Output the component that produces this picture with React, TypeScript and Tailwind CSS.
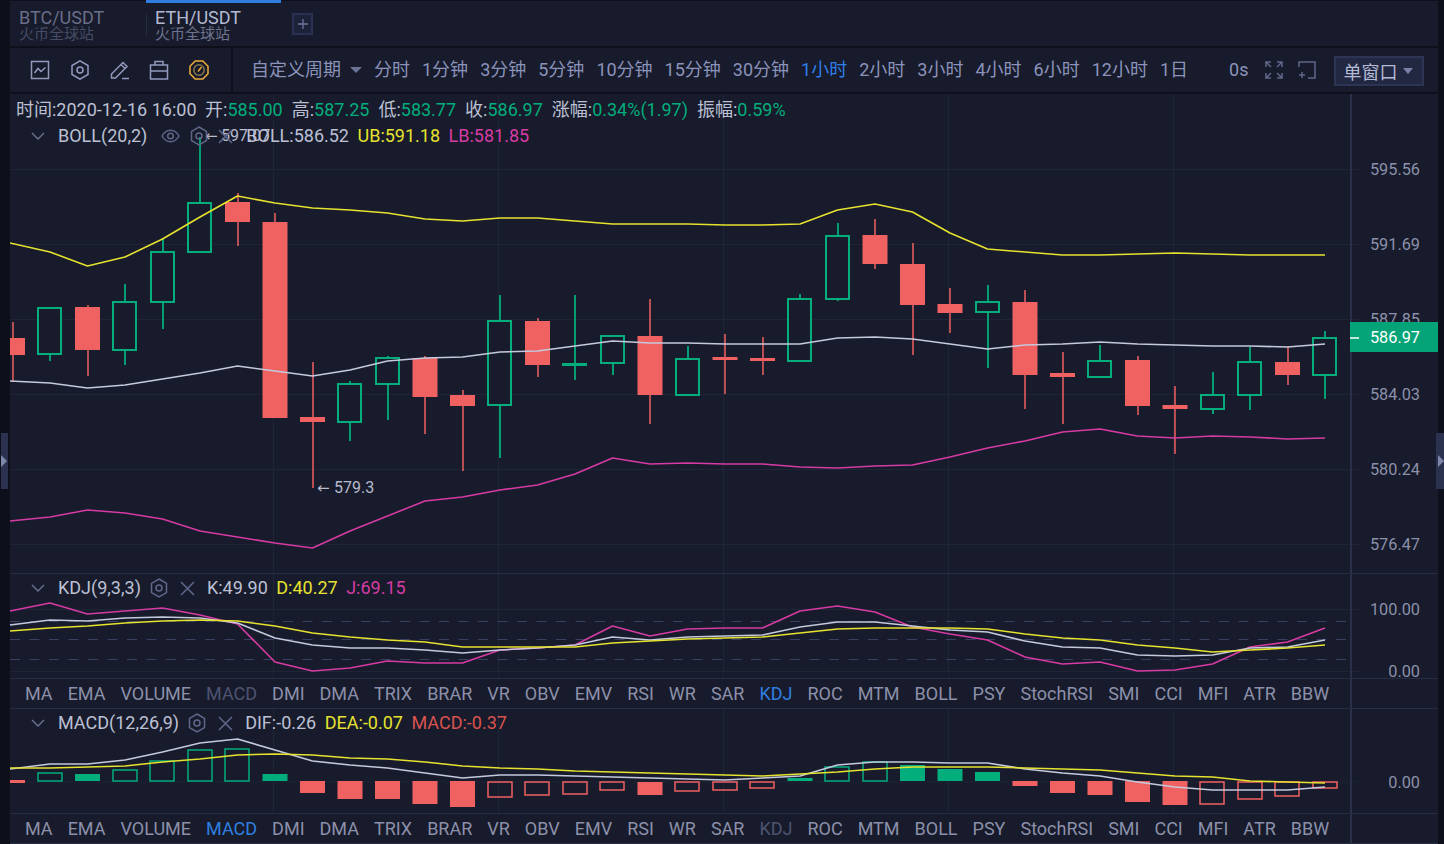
import * as React from 'react';

const GREEN = '#03ad7c';
const RED = '#f06262';
const YELLOW = '#e6e22f';
const PINK = '#d63ba3';
const WHITE = '#c5c9de';
const GRID = '#1f2537';
const AXIS = '#2a3047';
const AXIS_TEXT = '#8c90aa';

const slotX = (i: number) => 12.5 + 37.5 * i;

// [high, top of body, bottom of body, low, up?] in page pixels
const candles: [number, number, number, number, boolean][] = [
  [322, 338, 355, 382, false],
  [307, 308, 354, 361, true],
  [305, 307, 350, 376, false],
  [284, 302, 350, 365, true],
  [238, 252, 302, 329, true],
  [137, 203, 252, 252, true],
  [193, 202, 222, 246, false],
  [213, 222, 418, 418, false],
  [362, 417, 422, 488, false],
  [381, 384, 422, 441, true],
  [356, 358, 384, 420, true],
  [356, 358, 397, 434, false],
  [390, 395, 406, 471, false],
  [295, 321, 405, 458, true],
  [318, 321, 365, 377, false],
  [295, 364, 365, 380, true],
  [336, 336, 363, 375, true],
  [299, 336, 395, 424, false],
  [346, 359, 395, 395, true],
  [334, 357, 360, 394, false],
  [337, 358, 361, 375, false],
  [294, 299, 361, 362, true],
  [223, 236, 299, 301, true],
  [219, 235, 264, 269, false],
  [243, 264, 305, 355, false],
  [288, 304, 313, 333, false],
  [285, 302, 312, 368, true],
  [290, 302, 375, 409, false],
  [352, 373, 377, 424, false],
  [345, 361, 377, 378, true],
  [356, 360, 406, 415, false],
  [386, 405, 409, 454, false],
  [372, 395, 409, 414, true],
  [347, 362, 395, 410, true],
  [346, 362, 375, 385, false],
  [331, 338, 375, 399, true],
];

const bollUpper = [243, 252, 266, 257, 239, 217, 196, 203, 208, 210, 213, 219, 221, 218, 218, 221, 224, 224, 224, 225, 225, 224, 210, 204, 212, 233, 249, 252, 255, 255, 254, 253, 254, 255, 255, 255];
const bollMid = [381, 383, 388, 385, 379, 373, 366, 371, 376, 370, 361, 358, 357, 352, 351, 346, 341, 343, 343, 344, 344, 344, 338, 337, 339, 344, 349, 345, 344, 342, 344, 345, 346, 346, 347, 344];
const bollLower = [521, 517, 510, 513, 519, 531, 537, 543, 548, 531, 516, 501, 497, 490, 485, 474, 458, 464, 463, 464, 464, 467, 468, 466, 465, 457, 448, 441, 432, 429, 436, 438, 436, 437, 439, 438];

const kdjJ = [611, 603, 614, 611, 608, 615, 624, 662, 671, 668, 661, 663, 663, 650, 648, 645, 626, 636, 629, 628, 628, 611, 606, 612, 627, 634, 640, 657, 664, 662, 671, 670, 664, 647, 642, 628];
const kdjK = [625, 620, 621, 618, 617, 618, 623, 638, 645, 648, 648, 650, 653, 650, 648, 645, 637, 640, 637, 636, 635, 627, 622, 622, 626, 630, 632, 641, 647, 648, 655, 656, 655, 648, 647, 640];
const kdjD = [631, 628, 626, 623, 621, 620, 621, 626, 633, 637, 640, 642, 647, 647, 647, 647, 643, 641, 639, 638, 637, 633, 629, 628, 628, 628, 629, 634, 638, 640, 645, 648, 652, 650, 648, 645];

const macdDif = [769, 764, 764, 760, 752, 743, 739, 750, 761, 765, 768, 773, 778, 775, 775, 776, 777, 778, 779, 780, 778, 776, 765, 762, 762, 763, 763, 769, 773, 776, 782, 787, 790, 790, 790, 787];
const macdDea = [768, 768, 767, 766, 762, 759, 755, 754, 755, 758, 759, 762, 766, 768, 769, 771, 772, 773, 774, 775, 776, 774, 772, 769, 767, 767, 767, 768, 769, 770, 773, 776, 777, 781, 782, 783];

// [top, bottom, up?, filled?]
const macdBars: [number, number, boolean, boolean][] = [
  [780, 783, false, true],
  [773, 781, true, false],
  [774, 781, true, true],
  [770, 781, true, false],
  [761, 781, true, false],
  [750, 781, true, false],
  [749, 781, true, false],
  [774, 781, true, true],
  [781, 793, false, true],
  [781, 799, false, true],
  [781, 799, false, true],
  [781, 804, false, true],
  [781, 807, false, true],
  [782, 797, false, false],
  [782, 795, false, false],
  [782, 794, false, false],
  [782, 790, false, false],
  [782, 795, false, true],
  [782, 791, false, false],
  [782, 790, false, false],
  [782, 788, false, false],
  [778, 781, true, true],
  [767, 781, true, false],
  [762, 781, true, false],
  [765, 781, true, true],
  [769, 781, true, true],
  [772, 781, true, true],
  [781, 786, false, true],
  [781, 793, false, true],
  [781, 795, false, true],
  [781, 802, false, true],
  [781, 805, false, true],
  [782, 804, false, false],
  [782, 799, false, false],
  [782, 796, false, false],
  [782, 788, false, false],
];

const periods = ['分时', '1分钟', '3分钟', '5分钟', '10分钟', '15分钟', '30分钟', '1小时', '2小时', '3小时', '4小时', '6小时', '12小时', '1日'];
const indicators = ['MA', 'EMA', 'VOLUME', 'MACD', 'DMI', 'DMA', 'TRIX', 'BRAR', 'VR', 'OBV', 'EMV', 'RSI', 'WR', 'SAR', 'KDJ', 'ROC', 'MTM', 'BOLL', 'PSY', 'StochRSI', 'SMI', 'CCI', 'MFI', 'ATR', 'BBW'];

function linePoints(ys: number[]): string {
  return ys.map((y, i) => `${i === 0 ? 10 : slotX(i)},${y}`).join(' ');
}

function Series({ ys, color }: { ys: number[]; color: string }) {
  return <polyline points={linePoints(ys)} fill="none" stroke={color} strokeWidth={1.6} strokeLinejoin="round" />;
}

function VerticalGrid({ top, bottom }: { top: number; bottom: number }) {
  return (
    <>
      {[273, 498, 723, 948, 1173].map((x) => (
        <line key={x} x1={x + 0.5} x2={x + 0.5} y1={top} y2={bottom} stroke={GRID} />
      ))}
      <line x1={1351} x2={1351} y1={top} y2={bottom} stroke={AXIS} strokeWidth={2} />
    </>
  );
}

function AxisLabel({ y, label }: { y: number; label: string }) {
  return (
    <>
      <line x1={10} x2={1359} y1={y + 0.5} y2={y + 0.5} stroke={GRID} />
      <text x={1420} y={y + 6} textAnchor="end" fontSize={16.3} fill={AXIS_TEXT}>
        {label}
      </text>
    </>
  );
}

function Extreme({ x, y, textX, label }: { x: number; y: number; textX: number; label: string }) {
  return (
    <text x={x} y={y} fontSize={16} fill="#b8bccf">
      <tspan fontFamily="'DejaVu Sans', sans-serif" fontSize={15}>
        ←
      </tspan>
      <tspan x={textX}>{label}</tspan>
    </text>
  );
}

function Chevron() {
  return (
    <svg width="14" height="8" viewBox="0 0 14 8" fill="none" stroke="#6d7391" strokeWidth="1.4" className="ml-[21px] mr-[13px] shrink-0">
      <path d="M1 1l6 6 6-6" />
    </svg>
  );
}

function HexIcon() {
  return (
    <svg width="18" height="20" viewBox="0 0 18 20" fill="none" stroke="#61678a" strokeWidth="1.5" className="shrink-0">
      <path d="M9 1l7.5 4.4v9.2L9 19l-7.5-4.4V5.4z" />
      <circle cx="9" cy="10" r="3" />
    </svg>
  );
}

function EyeIcon() {
  return (
    <svg width="19" height="14" viewBox="0 0 19 14" fill="none" stroke="#61678a" strokeWidth="1.4" className="shrink-0">
      <path d="M1 7c2.2-3.8 5-5.7 8.5-5.7S15.800 3.200 18 7c-2.200 3.800-5 5.700-8.500 5.700S3.200 10.800 1 7z" />
      <circle cx="9.5" cy="7" r="2.8" />
    </svg>
  );
}

function CloseIcon() {
  return (
    <svg width="15" height="15" viewBox="0 0 15 15" fill="none" stroke="#61678a" strokeWidth="1.5" className="shrink-0">
      <path d="M1 1l13 13M14 1L1 14" />
    </svg>
  );
}

function IndicatorHeader({ label, eye, values }: { label: string; eye?: boolean; values: [string, string][] }) {
  return (
    <div className="flex h-6 items-center text-[18px] text-[#bcc0d4]">
      <Chevron />
      <span>{label}</span>
      {eye ? (
        <div className="ml-[14px] mr-[13px] flex items-center gap-[10px]">
          <EyeIcon />
          <HexIcon />
          <CloseIcon />
        </div>
      ) : (
        <div className="ml-[9px] mr-[12px] flex items-center gap-[12px]">
          <HexIcon />
          <CloseIcon />
        </div>
      )}
      <div className="flex gap-[8.5px]">
        {values.map(([text, color]) => (
          <span key={text} style={{ color }}>
            {text}
          </span>
        ))}
      </div>
    </div>
  );
}

function IndicatorTabs({ active, muted }: { active: string; muted: string }) {
  return (
    <div className="flex h-[29px] w-[1342px] items-center gap-[15px] border-r-2 border-[#2a3047] pl-[15px] text-[18px] text-[#8c90aa]">
      {indicators.map((name) => (
        <span key={name} className={name === active ? 'text-[#2f7fe0]' : name === muted ? 'text-[#4e5371]' : ''}>
          {name}
        </span>
      ))}
    </div>
  );
}

function ToolIcon({ children }: { children: React.ReactNode }) {
  return (
    <svg width="20" height="20" viewBox="0 0 20 20" fill="none" stroke="#9399bd" strokeWidth="1.5" className="shrink-0">
      {children}
    </svg>
  );
}

function MainChart() {
  return (
    <svg width="1428" height="479" viewBox="10 94 1428 479" className="block font-[Roboto]">
      {[169, 244, 319, 394, 469, 544].map((y, i) => (
        <AxisLabel key={y} y={y} label={['595.56', '591.69', '587.85', '584.03', '580.24', '576.47'][i]} />
      ))}
      <VerticalGrid top={94} bottom={573} />
      {candles.map(([high, top, bottom, low, up], i) => {
        const x = slotX(i);
        const wickX = Math.round(x);
        const color = up ? GREEN : RED;
        const wick = up ? 1.8 : 1.5;
        return (
          <g key={i}>
            <line x1={wickX} x2={wickX} y1={high} y2={top} stroke={color} strokeWidth={wick} />
            <line x1={wickX} x2={wickX} y1={bottom} y2={low} stroke={color} strokeWidth={wick} />
            {up ? (
              <rect x={Math.floor(x - 12.5) + 1} y={top} width={23} height={Math.max(bottom - top, 1)} fill="#171b2b" stroke={color} strokeWidth={2} />
            ) : (
              <rect x={x - 12.5} y={top} width={25} height={Math.max(bottom - top, 2)} fill={color} />
            )}
          </g>
        );
      })}
      <Series ys={bollUpper} color={YELLOW} />
      <Series ys={bollMid} color={WHITE} />
      <Series ys={bollLower} color={PINK} />
      <Extreme x={317} y={493} textX={334} label="579.3" />
      <Extreme x={205} y={141} textX={221} label="597.07" />
      <rect x={1350} y={322} width={89} height={30} fill="#04a478" />
      <line x1={1350} x2={1359} y1={338} y2={338} stroke="#ffffff" strokeWidth={1.5} />
      <text x={1420} y={343} textAnchor="end" fontSize={16.3} fill="#ffffff">
        586.97
      </text>
    </svg>
  );
}

function KdjChart() {
  return (
    <svg width="1428" height="104" viewBox="10 574 1428 104" className="block overflow-visible font-[Roboto]">
      <AxisLabel y={609} label="100.00" />
      <AxisLabel y={671} label="0.00" />
      <VerticalGrid top={574} bottom={678} />
      {[621.5, 639.5, 659.5].map((y) => (
        <line key={y} x1={10} x2={1350} y1={y} y2={y} stroke="#3a4064" strokeDasharray="10 9.5" />
      ))}
      <Series ys={kdjJ} color={PINK} />
      <Series ys={kdjK} color={WHITE} />
      <Series ys={kdjD} color={YELLOW} />
    </svg>
  );
}

function MacdChart() {
  return (
    <svg width="1428" height="104" viewBox="10 709 1428 104" className="block font-[Roboto]">
      <AxisLabel y={781.5} label="0.00" />
      <VerticalGrid top={709} bottom={813} />
      {macdBars.map(([top, bottom, up, filled], i) => {
        const x = slotX(i);
        const color = up ? GREEN : RED;
        return filled ? (
          <rect key={i} x={x - 12.5} y={top} width={25} height={bottom - top} fill={color} />
        ) : (
          <rect key={i} x={Math.floor(x - 12)} y={top} width={24} height={bottom - top} fill="none" stroke={color} strokeWidth={1.5} />
        );
      })}
      <Series ys={macdDif} color={WHITE} />
      <Series ys={macdDea} color={YELLOW} />
    </svg>
  );
}

export default function App() {
  return (
    <div className="relative flex h-[844px] w-[1444px] overflow-hidden bg-[#0d101a] font-['Roboto','Noto_Sans_CJK_SC',sans-serif] text-[18px] leading-6">
      {/* side handles */}
      <div className="absolute left-[1px] top-[433px] z-10 flex h-[56px] w-[7px] items-center bg-[#2a3250]">
        <div className="h-0 w-0 border-y-[6px] border-l-[6px] border-y-transparent border-l-[#7f87ab]" />
      </div>
      <div className="absolute left-[1436px] top-[433px] z-10 flex h-[56px] w-[8px] items-center bg-[#2a3250] pl-[2px]">
        <div className="h-0 w-0 border-y-[6px] border-l-[6px] border-y-transparent border-l-[#7f87ab]" />
      </div>

      <div className="ml-[10px] flex w-[1428px] flex-col">
        {/* tabs */}
        <div className="mt-[1px] flex h-[45px] shrink-0 items-center bg-[#171b2b]">
          <div className="flex h-full w-[136px] flex-col justify-center pl-[9px] pt-[2px] text-[#6a6e88]">
            <span className="leading-[19px]">BTC/USDT</span>
            <span className="text-[15px] leading-[15px] text-[#464b66]">火币全球站</span>
          </div>
          <div className="relative flex h-full w-[135px] flex-col justify-center pl-[9px] pt-[2px] text-[#b4b9d2]">
            <div className="absolute left-0 top-[-1px] h-[3px] w-full bg-[#2f7de0]" />
            <div className="absolute left-0 top-[13px] h-[23px] w-px bg-[#272c41]" />
            <span className="leading-[19px]">ETH/USDT</span>
            <span className="text-[15px] leading-[15px] text-[#6f7490]">火币全球站</span>
          </div>
          <div className="ml-[11px] flex h-[22px] w-[21px] items-center justify-center border-2 border-[#2a3154] bg-[#1d2238]">
            <svg width="10" height="10" viewBox="0 0 10 10" stroke="#6f769c" strokeWidth="1.3">
              <path d="M5 0v10M0 5h10" />
            </svg>
          </div>
        </div>

        {/* toolbar */}
        <div className="mt-[2px] flex h-[44px] shrink-0">
          <div className="flex w-[221px] items-center gap-[19.75px] bg-[#171b2b] pl-[20px]">
            <ToolIcon>
              <rect x="1.5" y="1.5" width="17" height="17" />
              <path d="M4.500 13l3.500-4.500 3 3 4.500-4" />
            </ToolIcon>
            <ToolIcon>
              <path d="M10 .9l8 4.600v9L10 19.100l-8-4.600v-9z" />
              <circle cx="10" cy="10" r="3" />
            </ToolIcon>
            <ToolIcon>
              <path d="M1.500 18v-4L13 2.500l4 4L5.500 18zM11 4.500l4 4M12 18.500h7" />
            </ToolIcon>
            <ToolIcon>
              <path d="M1.500 5h17v14h-17zM1.500 11h17M6 5V1.500h8V5" />
            </ToolIcon>
            <svg width="20" height="20" viewBox="0 0 20 20" fill="none" className="shrink-0">
              <path d="M6.200 1h7.600L19 6.200v7.600L13.800 19H6.200L1 13.800V6.200z" stroke="#f0ad3a" strokeWidth="1.5" />
              <circle cx="10" cy="10" r="5.2" stroke="#86754f" strokeWidth="1.5" />
              <path d="M9 11.500l3.500-4.500" stroke="#f0ad3a" strokeWidth="1.4" />
            </svg>
          </div>
          <div className="ml-[2px] flex flex-1 items-center bg-[#171b2b] pl-[18px] text-[#8b93bb]">
            <span>自定义周期</span>
            <div className="ml-[9px] mr-[12px] h-0 w-0 border-x-[6px] border-t-[6px] border-x-transparent border-t-[#6b7192]" />
            <div className="flex gap-[12px]">
              {periods.map((p) => (
                <span key={p} className={p === '1小时' ? 'text-[#2f7fe8]' : ''}>
                  {p}
                </span>
              ))}
            </div>
            <span className="ml-[41px]">0s</span>
            <svg width="18" height="18" viewBox="0 0 18 18" fill="none" stroke="#5f6688" strokeWidth="1.5" className="ml-[17px] shrink-0">
              <path d="M1 6V1h5M1 1l5 5M12 1h5v5M17 1l-5 5M1 12v5h5M1 17l5-5M12 17h5v-5M17 17l-5-5" />
            </svg>
            <svg width="18" height="18" viewBox="0 0 18 18" fill="none" stroke="#5f6688" strokeWidth="1.5" className="ml-[15px] shrink-0">
              <path d="M1 6V1h16v16h-7M1 14h6M4 11v6" />
            </svg>
            <div className="ml-[18px] mt-[2px] flex h-[30px] w-[90px] items-center border-2 border-[#2d3555] bg-[#222842] pl-[7px] text-[#b4bad6]">
              <span className="mt-[3px]">单窗口</span>
              <div className="ml-[6px] h-0 w-0 border-x-[5px] border-t-[6px] border-x-transparent border-t-[#7b82a6]" />
            </div>
          </div>
        </div>

        {/* main pane */}
        <div className="relative mt-[2px] h-[479px] shrink-0 bg-[#171b2b]">
          <MainChart />
          <div className="absolute left-[6px] top-[4px] flex h-6 gap-[9px] text-[#bcc0d4]">
            <span className="mr-[-0.5px]">时间:2020-12-16 16:00</span>
            <span>
              开:<span className="text-[#03ad7c]">585.00</span>
            </span>
            <span>
              高:<span className="text-[#03ad7c]">587.25</span>
            </span>
            <span>
              低:<span className="text-[#03ad7c]">583.77</span>
            </span>
            <span>
              收:<span className="text-[#03ad7c]">586.97</span>
            </span>
            <span>
              涨幅:<span className="text-[#03ad7c]">0.34%(1.97)</span>
            </span>
            <span>
              振幅:<span className="text-[#03ad7c]">0.59%</span>
            </span>
          </div>
          <div className="absolute left-0 top-[30px]">
            <IndicatorHeader
              label="BOLL(20,2)"
              eye
              values={[
                ['BOLL:586.52', '#bcc0d4'],
                ['UB:591.18', YELLOW],
                ['LB:581.85', PINK],
              ]}
            />
          </div>
        </div>

        {/* kdj pane */}
        <div className="relative h-[105px] shrink-0 border-t border-[#272d42] bg-[#171b2b]">
          <KdjChart />
          <div className="absolute left-0 top-[2px]">
            <IndicatorHeader
              label="KDJ(9,3,3)"
              values={[
                ['K:49.90', '#bcc0d4'],
                ['D:40.27', YELLOW],
                ['J:69.15', PINK],
              ]}
            />
          </div>
        </div>
        <div className="h-[31px] shrink-0 border-y border-[#272d42] bg-[#171b2b]">
          <IndicatorTabs active="KDJ" muted="MACD" />
        </div>

        {/* macd pane */}
        <div className="relative h-[104px] shrink-0 bg-[#171b2b]">
          <MacdChart />
          <div className="absolute left-0 top-[2px]">
            <IndicatorHeader
              label="MACD(12,26,9)"
              values={[
                ['DIF:-0.26', '#bcc0d4'],
                ['DEA:-0.07', YELLOW],
                ['MACD:-0.37', '#d9534f'],
              ]}
            />
          </div>
        </div>
        <div className="h-[31px] shrink-0 border-y border-[#272d42] bg-[#171b2b]">
          <IndicatorTabs active="MACD" muted="KDJ" />
        </div>
      </div>
    </div>
  );
}
